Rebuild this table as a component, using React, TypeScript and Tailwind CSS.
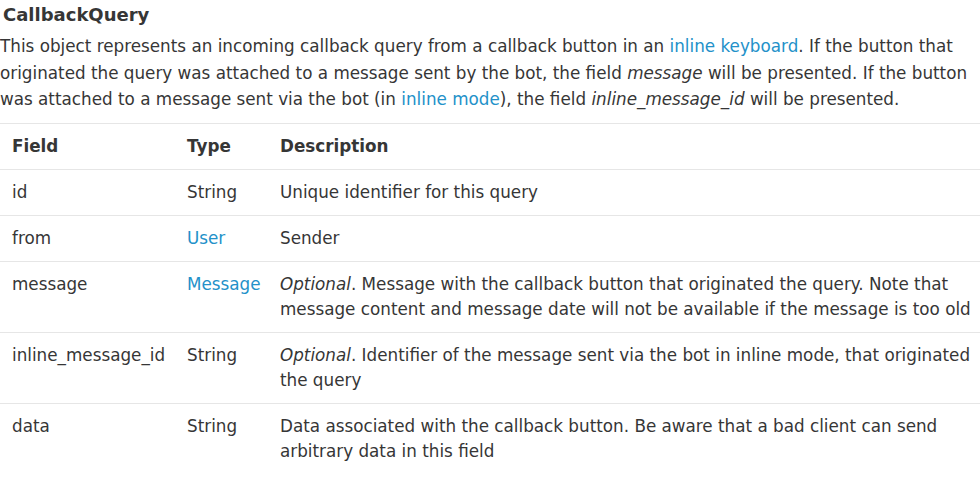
import React from "react";

type Row = {
  field: string;
  type: string;
  typeLink?: boolean;
  desc: React.ReactNode;
};

const ROWS: Row[] = [
  { field: "id", type: "String", desc: "Unique identifier for this query" },
  { field: "from", type: "User", typeLink: true, desc: "Sender" },
  {
    field: "message",
    type: "Message",
    typeLink: true,
    desc: (
      <>
        <em>Optional</em>. Message with the callback button that originated the query. Note that
        message content and message date will not be available if the message is too old
      </>
    ),
  },
  {
    field: "inline_message_id",
    type: "String",
    desc: (
      <>
        <em>Optional</em>. Identifier of the message sent via the bot in inline mode, that
        originated the query
      </>
    ),
  },
  {
    field: "data",
    type: "String",
    desc: "Data associated with the callback button. Be aware that a bad client can send arbitrary data in this field",
  },
];

function Link({ children }: { children: React.ReactNode }) {
  return <a className="text-[#2391c9] no-underline">{children}</a>;
}

export default function App() {
  return (
    <div className="w-[980px] h-[492px] bg-white text-[#363636] font-['DejaVu_Sans',sans-serif] text-[16.8px] overflow-hidden">
      <h4 className="pl-[3px] pt-[3px] text-[18px] leading-[24px] font-bold">CallbackQuery</h4>
      <p className="mt-[6px] leading-[26.5px]">
        This object represents an incoming callback query from a callback button in an{" "}
        <Link>inline keyboard</Link>. If the button that originated the query was attached to a
        message sent by the bot, the field <em>message</em> will be presented. If the button was
        attached to a message sent via the bot (in <Link>inline mode</Link>), the field{" "}
        <em>inline_message_id</em> will be presented.
      </p>
      <table className="mt-[10px] w-full table-fixed border-collapse leading-[25px]">
        <thead>
          <tr className="border-t border-[#e6e6e6]">
            <th className="w-[187px] text-left font-bold px-[12px] py-[10px]">Field</th>
            <th className="w-[93px] text-left font-bold py-[10px]">Type</th>
            <th className="text-left font-bold py-[10px]">Description</th>
          </tr>
        </thead>
        <tbody>
          {ROWS.map((r) => (
            <tr key={r.field} className="border-t border-[#e6e6e6] align-top">
              <td className="px-[12px] py-[10px]">{r.field}</td>
              <td className="py-[10px]">{r.typeLink ? <Link>{r.type}</Link> : r.type}</td>
              <td className="py-[10px]">{r.desc}</td>
            </tr>
          ))}
        </tbody>
      </table>
    </div>
  );
}
